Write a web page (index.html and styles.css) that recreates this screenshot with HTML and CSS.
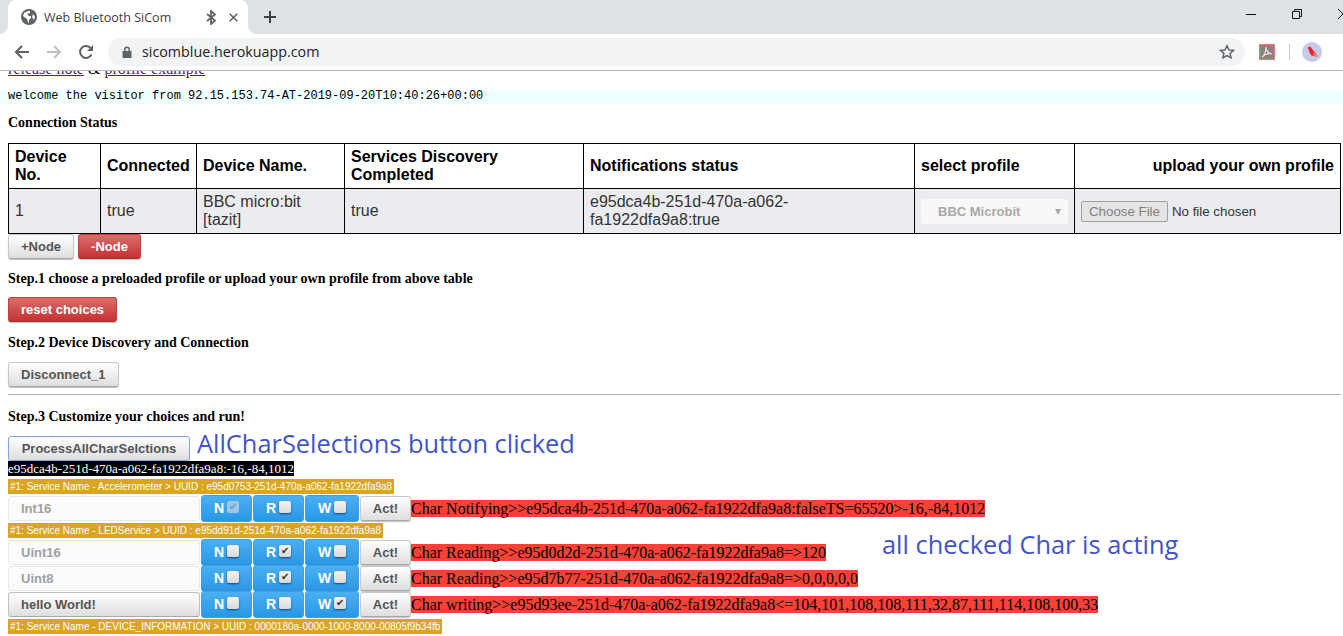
FILE: index.html
```html
<!DOCTYPE html>
<html lang="en">
<head>
    <meta charset="UTF-8">
    <title>Web Bluetooth SiCom</title>
    <link rel="stylesheet" href="styles.css">
</head>
<body>
    <!-- Browser chrome -->
    <div class="tabstrip">
        <div class="tab">
            <svg class="globe" width="16" height="16" viewBox="0 0 16 16"><circle cx="8" cy="8" r="8" fill="#5f6368"/><path d="M7 2 3 4 2 7l4 3 1 3 1 1V11l2-2V7H8L6 5l3-1V2zM12 5l-1 3 2 3 1-3z" fill="#fff"/></svg>
            <span class="tab-title">Web Bluetooth SiCom</span>
            <svg class="bt" width="10" height="15" viewBox="0 0 10 15"><path d="M1 4l8 6.500-4 3.500V1l4 3.500L1 11" fill="none" stroke="#5f6368" stroke-width="1.800"/></svg>
            <svg class="tab-close" width="9" height="9" viewBox="0 0 9 9"><path d="M.7.7l7.600 7.600M8.300.7.700 8.300" stroke="#5f6368" stroke-width="1.600"/></svg>
        </div>
        <svg class="newtab" width="12" height="12" viewBox="0 0 12 12"><path d="M6 0v12M0 6h12" stroke="#3c4043" stroke-width="2"/></svg>
        <div class="win-controls">
            <svg width="12" height="12" viewBox="0 0 12 12"><path d="M1 6.500h10" stroke="#111" stroke-width="1"/></svg>
            <svg width="12" height="12" viewBox="0 0 12 12"><path d="M1.500 3.500h7v7h-7zM3.500 3V1.500h7v7H9" fill="none" stroke="#111"/></svg>
            <svg width="12" height="12" viewBox="0 0 12 12"><path d="M1 1l10 10M11 1 1 11" stroke="#111"/></svg>
        </div>
    </div>
    <div class="toolbar">
        <svg width="16" height="16" viewBox="0 0 16 16"><path d="M15 8H2M8 2 2 8l6 6" fill="none" stroke="#5f6368" stroke-width="2"/></svg>
        <svg class="fwd" width="16" height="16" viewBox="0 0 16 16"><path d="M1 8h13M8 2l6 6-6 6" fill="none" stroke="#bdc1c6" stroke-width="2"/></svg>
        <svg class="reload" width="16" height="16" viewBox="0 0 16 16"><path d="M13.500 10.500A6 6 0 1 1 13 4.500" fill="none" stroke="#5f6368" stroke-width="2"/><path d="M15 1v6H9z" fill="#5f6368"/></svg>
        <div class="omnibox">
            <svg width="10" height="12" viewBox="0 0 10 12"><path d="M2 5V3.500a3 3 0 0 1 6 0V5h1.500v7H.5V5zM3.500 5h3V3.500a1.500 1.500 0 0 0-3 0z" fill="#5f6368"/></svg>
            <span class="url">sicomblue.herokuapp.com</span>
            <svg class="star" width="16" height="16" viewBox="0 0 16 16"><path d="M8 1.800l1.900 4.100 4.500.5-3.300 3 .9 4.400L8 11.600l-4 2.200.9-4.400-3.300-3 4.500-.5z" fill="none" stroke="#5f6368" stroke-width="1.500"/></svg>
        </div>
        <svg class="pdf" width="16" height="16" viewBox="0 0 16 16"><rect x=".5" y=".5" width="15" height="15" fill="#8e8280" stroke="#e08070"/><path d="M3 13c3-2 4-6 4-10 0 4 2 6 6 7-4-1-7 0-10 3z" fill="none" stroke="#e8e0de" stroke-width="1.200"/></svg>
        <span class="sep"></span>
        <svg class="avatar" width="20" height="20" viewBox="0 0 20 20"><circle cx="10" cy="10" r="10" fill="#c5cae9"/><path d="M5.500 6 7 4.800h1.500L11 8l2.500 3 1 2.500-3 .5-2-.5-2-3L6.500 7z" fill="#e8232f"/><path d="M11 10l6 4.500-5 .2z" fill="#ff7a50"/></svg>
    </div>

    <!-- Page, scrolled down a little -->
    <div class="page">
        <p class="links"><a href="#">release note</a> &amp; <a href="#">profile example</a></p>
        <pre class="visitor">welcome the visitor from 92.15.153.74-AT-2019-09-20T10:40:26+00:00</pre>
        <h5>Connection Status</h5>
        <table class="status">
            <tr>
                <th class="c-no">Device No.</th>
                <th class="c-conn">Connected</th>
                <th class="c-name">Device Name.</th>
                <th class="c-disc">Services Discovery Completed</th>
                <th class="c-note">Notifications status</th>
                <th class="c-prof">select profile</th>
                <th class="c-up">upload your own profile</th>
            </tr>
            <tr class="shaded">
                <td>1</td>
                <td>true</td>
                <td>BBC micro:bit [tazit]</td>
                <td>true</td>
                <td>e95dca4b-251d-470a-a062-fa1922dfa9a8:true</td>
                <td>
                    <div class="fake-select">BBC Microbit<span class="caret"></span></div>
                </td>
                <td>
                    <span class="file-btn">Choose File</span><span class="file-none">No file chosen</span>
                </td>
            </tr>
        </table>
        <div class="node-btns">
            <button class="btn">+Node</button>
            <button class="btn btn-red">-Node</button>
        </div>
        <h5 class="step1">Step.1 choose a preloaded profile or upload your own profile from above table</h5>
        <button class="btn btn-red btn-reset">reset choices</button>
        <h5 class="step2">Step.2 Device Discovery and Connection</h5>
        <button class="btn btn-disc">Disconnect_1</button>
        <hr>
        <h5 class="step3">Step.3 Customize your choices and run!</h5>
        <div class="process-row">
            <button class="btn btn-focus">ProcessAllCharSelctions</button>
            <span class="note">AllCharSelections button clicked</span>
        </div>
        <div class="readout"><span>e95dca4b-251d-470a-a062-fa1922dfa9a8:-16,-84,1012</span></div>

        <div class="service"><span>#1: Service Name - Accelerometer &gt; UUID : e95d0753-251d-470a-a062-fa1922dfa9a8</span></div>
        <div class="char-row">
            <div class="char-input">Int16</div>
            <div class="toggle"><b>N</b><span class="cb cb-off-on">&#10004;</span></div>
            <div class="toggle"><b>R</b><span class="cb"></span></div>
            <div class="toggle wide"><b>W</b><span class="cb"></span></div>
            <button class="btn act">Act!</button>
            <span class="log">Char Notifying&gt;&gt;e95dca4b-251d-470a-a062-fa1922dfa9a8:falseTS=65520&gt;-16,-84,1012</span>
        </div>
        <div class="service"><span>#1: Service Name - LEDService &gt; UUID : e95dd91d-251d-470a-a062-fa1922dfa9a8</span></div>
        <div class="char-row">
            <div class="char-input">Uint16</div>
            <div class="toggle"><b>N</b><span class="cb"></span></div>
            <div class="toggle"><b>R</b><span class="cb">&#10004;</span></div>
            <div class="toggle wide"><b>W</b><span class="cb"></span></div>
            <button class="btn act">Act!</button>
            <span class="log">Char Reading&gt;&gt;e95d0d2d-251d-470a-a062-fa1922dfa9a8=&gt;120</span>
        </div>
        <div class="char-row">
            <div class="char-input">Uint8</div>
            <div class="toggle"><b>N</b><span class="cb"></span></div>
            <div class="toggle"><b>R</b><span class="cb">&#10004;</span></div>
            <div class="toggle wide"><b>W</b><span class="cb"></span></div>
            <button class="btn act">Act!</button>
            <span class="log">Char Reading&gt;&gt;e95d7b77-251d-470a-a062-fa1922dfa9a8=&gt;0,0,0,0,0</span>
        </div>
        <div class="char-row">
            <div class="char-input as-btn">hello World!</div>
            <div class="toggle"><b>N</b><span class="cb"></span></div>
            <div class="toggle"><b>R</b><span class="cb"></span></div>
            <div class="toggle wide"><b>W</b><span class="cb">&#10004;</span></div>
            <button class="btn act">Act!</button>
            <span class="log">Char writing&gt;&gt;e95d93ee-251d-470a-a062-fa1922dfa9a8&lt;=104,101,108,108,111,32,87,111,114,108,100,33</span>
        </div>
        <div class="service"><span>#1: Service Name - DEVICE_INFORMATION &gt; UUID : 0000180a-0000-1000-8000-00805f9b34fb</span></div>

        <!-- Annotation pasted over the screenshot -->
        <span class="note note-acting">all checked Char is acting</span>
    </div>
</body>
</html>
```

FILE: styles.css
```css
html, body {
    margin: 0;
    padding: 0;
    height: 636px;
    overflow: hidden;
    background: white;
}

body {
    font-family: "Liberation Sans", Arial, sans-serif;
    color: #000;
}

/* Browser chrome */
.tabstrip {
    display: flex;
    align-items: flex-end;
    height: 34px;
    background-color: #dee1e6;
}

.tab {
    position: relative;
    display: flex;
    align-items: center;
    width: 240px;
    height: 34px;
    margin-left: 8px;
    padding-left: 13px;
    box-sizing: border-box;
    background: white;
    border-radius: 8px 8px 0 0;
}

.tab::before, .tab::after {
    content: "";
    position: absolute;
    bottom: 0;
    width: 8px;
    height: 8px;
}

.tab::before {
    left: -8px;
    background: radial-gradient(circle at 0 0, #dee1e6 7.5px, white 8px);
}

.tab::after {
    right: -8px;
    background: radial-gradient(circle at 100% 0, #dee1e6 7.5px, white 8px);
}

.tab-title {
    width: 162px;
    margin-left: 7px;
    font-family: "Open Sans", sans-serif;
    font-size: 12.500px;
    color: #3c4043;
}

.tab-close {
    margin-left: 13px;
}

.newtab {
    margin: 0 0 11px 16px;
}

.win-controls {
    display: flex;
    gap: 34px;
    margin: 0 -6px 0 auto;
    height: 28px;
    align-self: flex-start;
    align-items: center;
}

.toolbar {
    display: flex;
    align-items: center;
    height: 36px;
    padding-left: 14px;
    background: white;
    border-bottom: 1px solid #b9b9b9;
}

.fwd {
    margin-left: 16px;
}

.reload {
    margin-left: 16px;
}

.omnibox {
    display: flex;
    align-items: center;
    width: 1137px;
    height: 28px;
    margin-left: 14px;
    padding-left: 14px;
    box-sizing: border-box;
    background-color: #f1f3f4;
    border-radius: 14px;
}

.url {
    margin: -2px 0 0 10px;
    font-family: "Open Sans", sans-serif;
    font-size: 14.300px;
    color: #202124;
}

.star {
    margin-left: auto;
    margin-right: 10px;
}

.pdf {
    margin-left: 14px;
}

.sep {
    width: 1px;
    height: 16px;
    margin-left: 14px;
    background: #ccc;
}

.avatar {
    margin-left: 12px;
}

/* Page */
.page {
    position: relative;
    height: 565px;
    overflow: hidden;
    padding: 0 2px 0 8px;
    font-family: "Liberation Serif", "Times New Roman", serif;
    font-size: 16px;
}

.links {
    margin: -12px 0 0;
    line-height: 20px;
}

.links a {
    color: #551a8b;
}

.visitor {
    margin: 11px -2px 0 -8px;
    padding-left: 8px;
    height: 14px;
    line-height: 13px;
    font-family: "Liberation Mono", monospace;
    font-size: 12px;
    background-color: azure;
}

h5 {
    margin: 0;
    font-size: 14px;
    line-height: 16px;
}

.visitor + h5 {
    margin-top: 11px;
}

.status {
    margin-top: 12px;
    width: 1333px;
    table-layout: fixed;
    border-collapse: collapse;
    font-family: "Liberation Sans", Arial, sans-serif;
    font-size: 16px;
    line-height: 18px;
}

.status th, .status td {
    height: 45px;
    padding: 4px 6px;
    box-sizing: border-box;
    border: 1px solid black;
    text-align: left;
}

.status td {
    color: #333;
}

.status th.c-up {
    text-align: right;
}

.c-no { width: 92px; }
.c-conn { width: 96px; }
.c-name { width: 148px; }
.c-disc { width: 239px; }
.c-note { width: 331px; }
.c-prof { width: 160px; }

.shaded {
    background-color: #ebecf0;
}

.fake-select {
    position: relative;
    height: 25px;
    line-height: 25px;
    padding-left: 17px;
    background-color: #f8f8f8;
    border-radius: 3px;
    font-size: 13px;
    font-weight: bold;
    color: #a8a8a8;
}

.caret {
    position: absolute;
    right: 7px;
    top: 10px;
    border-left: 3px solid transparent;
    border-right: 3px solid transparent;
    border-top: 6px solid #a8a8a8;
}

.file-btn {
    display: inline-block;
    height: 19px;
    line-height: 19px;
    padding: 0 7px;
    font-size: 13.300px;
    color: #808080;
    background-color: #e4e4e4;
    border: 1px solid #a0a0a0;
    border-radius: 2px;
}

.file-none {
    margin-left: 4px;
    font-size: 13.300px;
    color: #333;
}

/* Buttons */
.btn {
    display: inline-block;
    height: 25px;
    padding: 0 12px;
    font-family: "Liberation Sans", Arial, sans-serif;
    font-size: 13px;
    font-weight: bold;
    color: #555;
    background: linear-gradient(#fff, #dedede);
    border: 1px solid #c8c8c8;
    border-bottom-color: #a8a8a8;
    border-radius: 3px;
    box-shadow: 0 1px 1px rgba(0, 0, 0, 0.25);
}

.btn-red {
    color: white;
    background: linear-gradient(#dc6c6c, #c43232);
    border-color: #c04040;
    border-bottom-color: #a83030;
}

.node-btns {
    display: flex;
    gap: 4px;
}

.step1 { margin-top: 12px; }
.btn-reset { display: block; margin-top: 10px; }
.step2 { margin-top: 13px; }
.btn-disc { display: block; margin-top: 11px; }

hr {
    margin: 7px 0 0;
    border: 0;
    border-top: 1px solid #aaa;
}

.step3 { margin-top: 14px; }

.process-row {
    display: flex;
    align-items: center;
    height: 25px;
    margin-top: 11px;
}

.btn-focus {
    width: 182px;
    padding: 0;
    border: 1px solid #7ea6e0;
}

.note {
    font-family: "Open Sans", sans-serif;
    font-size: 25.400px;
    color: #4354c8;
}

.process-row .note {
    margin: 0 0 12px 7px;
}

.note-acting {
    position: absolute;
    left: 882px;
    top: 456px;
}

.readout {
    height: 15px;
    line-height: 15px;
    font-size: 13px;
}

.readout span {
    display: inline-block;
    background: black;
    color: white;
}

.readout + .service {
    margin-top: 3px;
}

.service {
    height: 15px;
    margin: 2px 0 1px;
    line-height: 15px;
    font-family: "Liberation Sans", Arial, sans-serif;
    font-size: 10px;
}

.service span {
    display: inline-block;
    padding: 0 2px;
    background-color: goldenrod;
    color: white;
}

/* Characteristic rows */
.char-row {
    display: flex;
    align-items: center;
    height: 26px;
}

.char-input {
    width: 192px;
    height: 25px;
    line-height: 23px;
    padding-left: 12px;
    box-sizing: border-box;
    font-family: "Liberation Sans", Arial, sans-serif;
    font-size: 13px;
    font-weight: bold;
    color: #a0a0a0;
    background-color: #fbfbfb;
    border: 1px solid #e8e8e8;
    border-radius: 3px;
}

.char-input.as-btn {
    color: #555;
    background: linear-gradient(#fff, #dedede);
    border-color: #c0c0c0;
    border-bottom-color: #a8a8a8;
}

.toggle {
    display: flex;
    align-items: center;
    justify-content: center;
    gap: 3px;
    width: 51px;
    height: 27px;
    margin-left: 1px;
    box-sizing: border-box;
    font-family: "Liberation Sans", Arial, sans-serif;
    font-size: 14px;
    color: white;
    background: linear-gradient(#4bb0f2, #2a96e4);
    border: 1px solid #3a9fe8;
    border-radius: 3px;
}

.toggle.wide {
    width: 54px;
}

.cb {
    display: block;
    width: 12px;
    height: 12px;
    margin-top: -3px;
    line-height: 12px;
    text-align: center;
    font-size: 10px;
    color: #333;
    background: linear-gradient(#f4f4f4, #d8d8d8);
    border-radius: 2px;
    box-shadow: 0 1px 2px rgba(0, 30, 70, 0.7);
}

.cb-off-on {
    color: #6f9fc8;
    background: #9cc8e8;
    box-shadow: none;
}

.act {
    width: 51px;
    margin-left: 1px;
    padding: 0;
}

.log {
    height: 17px;
    line-height: 17px;
    background-color: #f44336;
}
```
